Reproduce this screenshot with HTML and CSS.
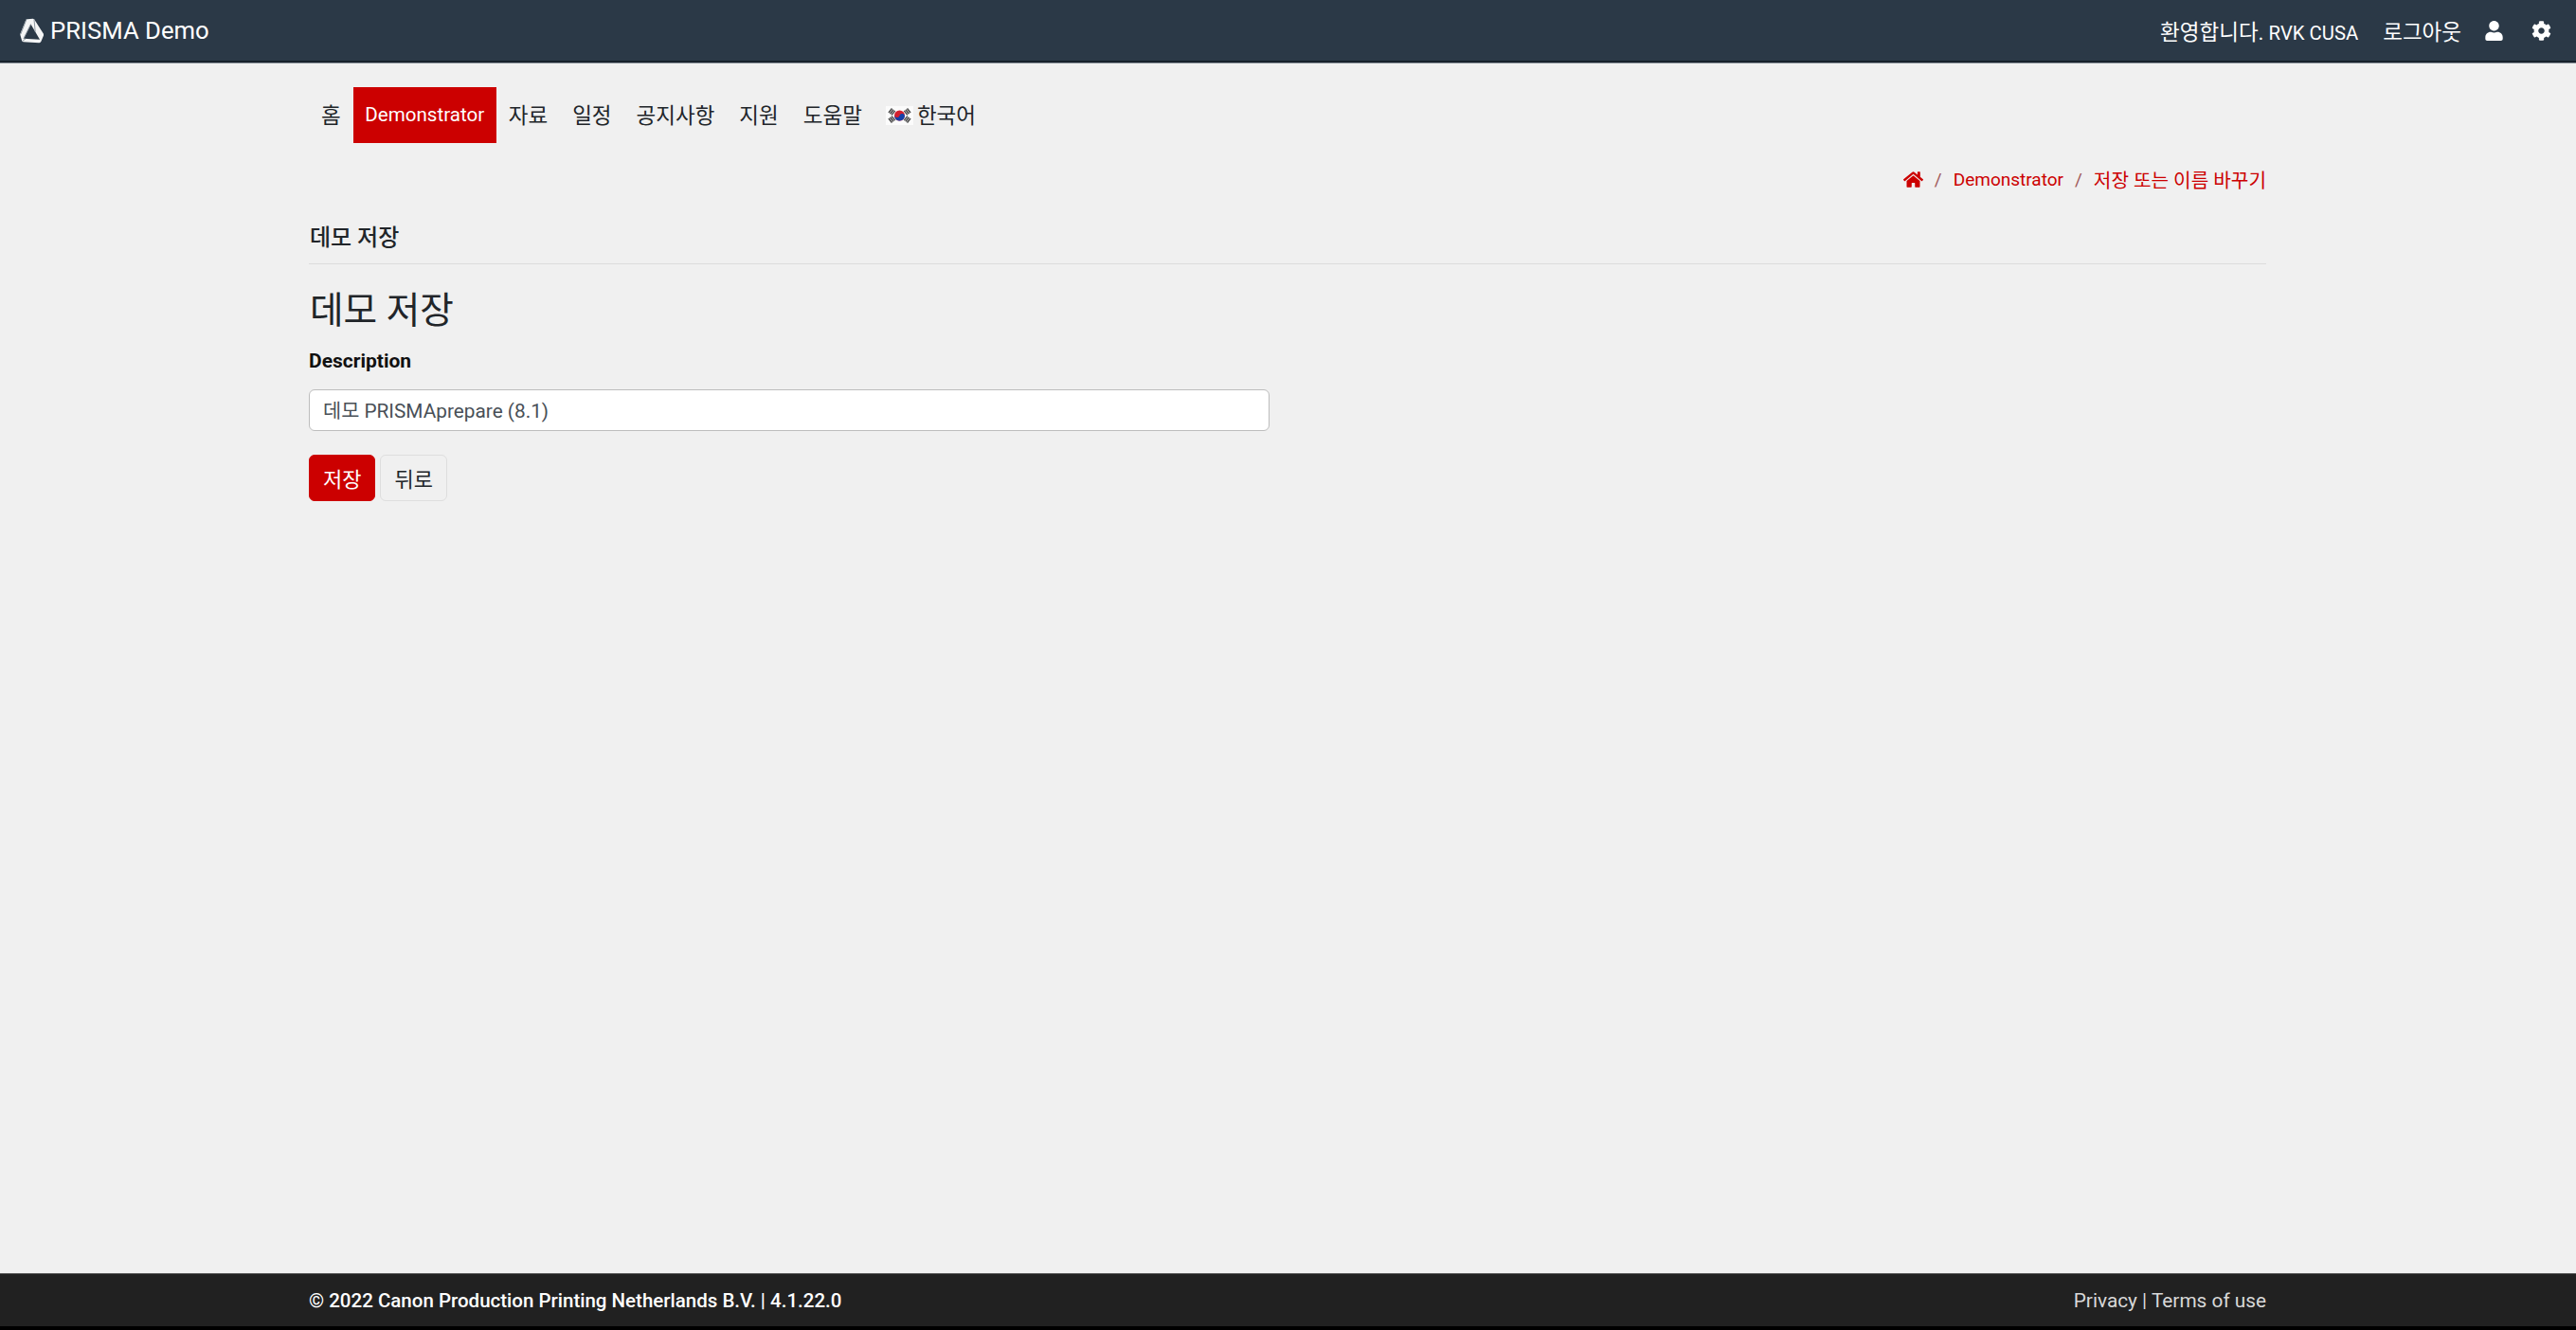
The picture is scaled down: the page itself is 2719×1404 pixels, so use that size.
FILE: index.html
```html
<!DOCTYPE html>
<html lang="ko">
<head>
<meta charset="utf-8">
<title>PRISMA Demo</title>
<link rel="stylesheet" href="styles.css">
</head>
<body>
<div class="page">
  <header class="topbar">
    <a class="brand">
      <svg class="brand-logo" viewBox="0 0 25 27" aria-hidden="true">
        <path fill-rule="evenodd" d="M6.6 1.6 Q7 1.2 8 1.2 L13.6 .7 Q14.6 .7 15.2 1.6 L24.8 16.4 Q25.4 17.4 25 18.4 L22.4 24.8 Q21.8 26.2 20.4 26.2 L3.6 25.2 Q2.4 25.1 2.1 24 L.5 18.2 Q.2 17.2 .6 16.2 Z M11.5 6.6 L3.9 21.8 L21 22.8 Z" fill="#f4f5f6"/>
        <path d="M6.8 1.8 L.8 17 M11.5 6.6 L3.9 21.8 M2.4 24.6 L6 21.9 M15 1.4 L16.2 14.6" fill="none" stroke="#8f99a2" stroke-width="1"/>
      </svg>
      <span>PRISMA Demo</span>
    </a>
    <nav class="usermenu">
      <span class="welcome"><span class="ko">환영합니다.</span> RVK CUSA</span>
      <a class="logout ko">로그아웃</a>
      <svg class="ico-user" viewBox="0 0 448 512" aria-hidden="true"><path d="M224 256c70.7 0 128-57.3 128-128S294.7 0 224 0 96 57.3 96 128s57.3 128 128 128zm89.6 32h-16.7c-22.2 10.2-46.9 16-72.9 16s-50.6-5.8-72.9-16h-16.7C60.2 288 0 348.2 0 422.4V464c0 26.5 21.5 48 48 48h352c26.5 0 48-21.5 48-48v-41.6c0-74.2-60.2-134.4-134.4-134.4z"/></svg>
      <svg class="ico-cog" viewBox="0 0 512 512" aria-hidden="true"><path d="M487.4 315.7l-42.6-24.6c4.3-23.2 4.3-47 0-70.2l42.6-24.6c4.9-2.8 7.1-8.6 5.5-14-11.1-35.6-30-67.8-54.7-94.6-3.8-4.1-10-5.1-14.8-2.3L380.8 110c-17.9-15.4-38.5-27.3-60.8-35.1V25.8c0-5.6-3.9-10.5-9.4-11.7-36.7-8.2-74.3-7.8-109.2 0-5.5 1.2-9.4 6.1-9.4 11.7V75c-22.2 7.9-42.8 19.8-60.8 35.1L88.7 85.5c-4.9-2.8-11-1.9-14.8 2.3-24.7 26.7-43.6 58.9-54.7 94.6-1.7 5.4.6 11.2 5.5 14L67.3 221c-4.3 23.2-4.3 47 0 70.2l-42.6 24.6c-4.9 2.8-7.1 8.6-5.5 14 11.1 35.6 30 67.8 54.7 94.6 3.8 4.1 10 5.1 14.8 2.3l42.6-24.6c17.9 15.4 38.5 27.3 60.8 35.1v49.2c0 5.6 3.9 10.5 9.4 11.7 36.7 8.2 74.3 7.8 109.2 0 5.5-1.2 9.4-6.1 9.4-11.7v-49.2c22.2-7.9 42.8-19.8 60.8-35.1l42.6 24.6c4.9 2.8 11 1.9 14.8-2.3 24.7-26.7 43.6-58.9 54.7-94.6 1.5-5.5-.7-11.3-5.6-14.1zM256 336c-44.1 0-80-35.9-80-80s35.9-80 80-80 80 35.9 80 80-35.9 80-80 80z"/></svg>
    </nav>
  </header>

  <main class="main">
    <nav class="mainnav">
      <a class="navitem">홈</a>
      <a class="navitem active">Demonstrator</a>
      <a class="navitem">자료</a>
      <a class="navitem">일정</a>
      <a class="navitem">공지사항</a>
      <a class="navitem">지원</a>
      <a class="navitem">도움말</a>
      <a class="navitem lang">
        <svg class="flag" viewBox="0 0 29 20" aria-hidden="true">
          <rect width="29" height="20" fill="#fbfbfb"/>
          <circle cx="14.5" cy="10" r="5.5" fill="#d3202f"/>
          <path d="M9 10a5.5 5.5 0 0 0 11 0 2.75 2.75 0 0 0-5.5 0 2.75 2.75 0 0 1-5.5 0z" fill="#1540a8" transform="rotate(15 14.5 10)"/>
          <g stroke="#4a4a4a" stroke-width="1.5">
            <path d="M3 7 6.5 2.5M4.6 8.2 8.1 3.7M6.2 9.4 9.7 4.9"/>
            <path d="M19.3 4.9 22.8 9.4M20.9 3.7 24.4 8.2M22.5 2.5 26 7"/>
            <path d="M3 13 6.5 17.5M4.6 11.8 8.1 16.3M6.2 10.6 9.7 15.1"/>
            <path d="M19.3 15.1 22.8 10.6M20.9 16.3 24.4 11.8M22.5 17.5 26 13"/>
          </g>
        </svg>
        <span>한국어</span>
      </a>
    </nav>

    <ol class="crumbs">
      <li class="crumb">
        <svg class="ico-home" viewBox="0 0 576 512" aria-hidden="true"><path d="M280.37 148.26L96 300.11V464a16 16 0 0 0 16 16l112.06-.29a16 16 0 0 0 15.92-16V368a16 16 0 0 1 16-16h64a16 16 0 0 1 16 16v95.64a16 16 0 0 0 16 16.05L464 480a16 16 0 0 0 16-16V300L295.67 148.26a12.19 12.19 0 0 0-15.3 0zM571.6 251.47L488 182.56V44.05a12 12 0 0 0-12-12h-56a12 12 0 0 0-12 12v72.61L318.47 43a48 48 0 0 0-61 0L4.34 251.47a12 12 0 0 0-1.6 16.9l25.5 31A12 12 0 0 0 45.15 301l235.22-193.74a12.19 12.19 0 0 1 15.3 0L530.9 301a12 12 0 0 0 16.9-1.6l25.5-31a12 12 0 0 0-1.7-16.93z"/></svg>
      </li>
      <li class="sep">/</li>
      <li class="crumb">Demonstrator</li>
      <li class="sep">/</li>
      <li class="crumb crumb-ko">저장 또는 이름 바꾸기</li>
    </ol>

    <h2 class="section-title">데모 저장</h2>
    <h1 class="page-title">데모 저장</h1>

    <form class="form">
      <label class="label" for="desc">Description</label>
      <input class="input" id="desc" type="text" value="데모 PRISMAprepare (8.1)">
      <div class="actions">
        <button class="btn btn-primary" type="button">저장</button>
        <button class="btn btn-light" type="button">뒤로</button>
      </div>
    </form>
  </main>

  <footer class="footer">
    <div class="footer-inner">
      <span class="copy">© 2022 Canon Production Printing Netherlands B.V. | 4.1.22.0</span>
      <span class="links">Privacy | Terms of use</span>
    </div>
  </footer>
</div>
</body>
</html>
```
FILE: styles.css
```css
* { box-sizing: border-box; }
html, body { margin: 0; height: 100%; }
body {
  font-family: Roboto, "Noto Sans CJK KR", sans-serif;
  font-size: 21px;
  color: #212529;
  background: #f0f0f0;
  overflow: hidden;
}
.page { height: 1404px; display: flex; flex-direction: column; }
.ko { font-size: 22.5px; }

.topbar {
  flex: 0 0 67px;
  display: flex;
  align-items: center;
  justify-content: space-between;
  padding: 0 26px 2px 21px;
  background: #2b3947;
  border-bottom: 1px solid #8a929a;
  box-shadow: inset 0 -2px 0 #17212b;
  color: #fff;
}
.brand { display: flex; align-items: center; gap: 7px; font-size: 25.7px; }
.brand-logo { width: 25px; height: 27px; }
.usermenu { display: flex; align-items: center; font-size: 20.3px; }
.logout { margin-left: 26px; }
.ico-user { width: 19px; height: 21px; fill: #fff; margin-left: 25px; }
.ico-cog { width: 21px; height: 21px; fill: #fff; margin-left: 30px; }

.main {
  flex: 1;
  margin: 0 327px 0 326px;
  display: flex;
  flex-direction: column;
}
.mainnav { display: flex; align-items: stretch; height: 59px; margin-top: 25px; }
.navitem { display: flex; align-items: center; padding: 0 13px 4px; font-size: 22.5px; }
.navitem.active { padding: 0 12.5px 2px; background: #cc0000; color: #fff; font-size: 20.6px; }
.lang { gap: 4px; padding-left: 12px; }
.flag { width: 29px; height: 20px; margin-top: 4px; }

.crumbs {
  list-style: none;
  margin: 24px 0 0;
  padding: 0;
  height: 28px;
  display: flex;
  justify-content: flex-end;
  align-items: center;
  gap: 12px;
  color: #cc0000;
  font-size: 19px;
}
.crumb-ko { font-size: 20.2px; }
.sep { color: #a05a5a; }
.ico-home { display: block; width: 21px; height: 19px; fill: #cc0000; }

.section-title {
  margin: 32px 0 0;
  padding: 0 0 11px 1px;
  line-height: 32px;
  font-size: 24px;
  font-weight: 500;
  border-bottom: 1px solid #dcdcdc;
}
.page-title { margin: 24px 0 0; padding-left: 1px; line-height: 50px; font-size: 38.7px; font-weight: 400; }
.form { display: flex; flex-direction: column; align-items: flex-start; }
.label { margin-top: 14px; line-height: 28px; font-size: 21px; font-weight: 700; color: #111; }
.input {
  margin-top: 16px;
  width: 1014px;
  height: 44px;
  padding: 0 14px 2px;
  border: 1px solid #bdbdbd;
  border-radius: 6px;
  background: #fff;
  font: inherit;
  font-size: 20.8px;
  color: #495057;
}
.actions { display: flex; gap: 5px; margin-top: 25px; }
.btn {
  height: 49px;
  padding: 0 14px 2px;
  border-radius: 6px;
  font: inherit;
  font-size: 22px;
}
.btn-primary { background: #cc0000; border: 1px solid #cc0000; color: #fff; }
.btn-light { background: #f0f0f0; border: 1px solid #dedede; color: #212529; }

.footer {
  flex: 0 0 60px;
  background: #212121;
  border-top: 1px solid #555;
  border-bottom: 4px solid #000;
  color: #fff;
  font-size: 20.8px;
}
.footer-inner {
  height: 100%;
  margin: 0 327px 0 326px;
  display: flex;
  align-items: center;
  justify-content: space-between;
}
.copy { font-weight: 500; font-size: 20.5px; }
.links { color: #d8d8d8; }
```
